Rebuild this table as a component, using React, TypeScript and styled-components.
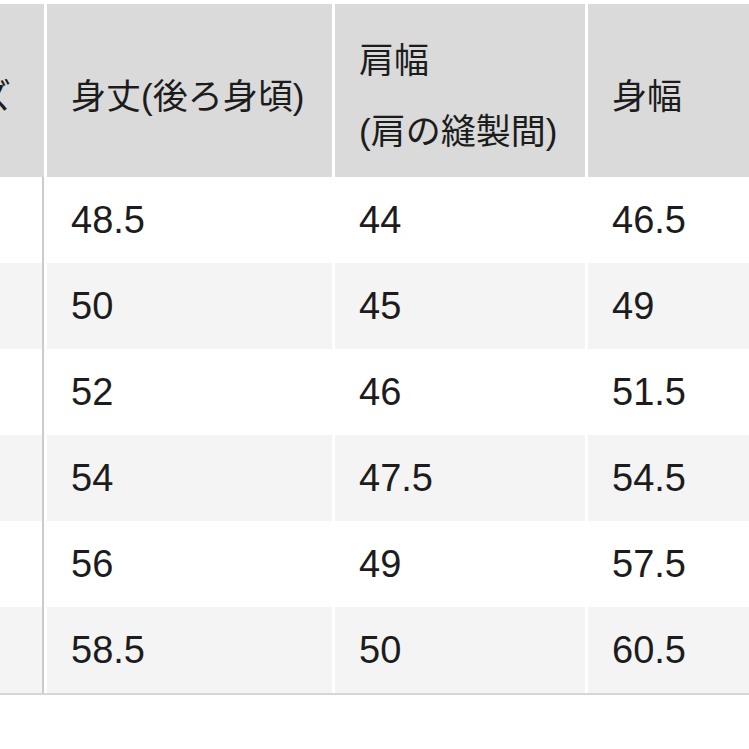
import React from 'react';
import styled, { createGlobalStyle } from 'styled-components';

const GlobalStyle = createGlobalStyle`
  html, body {
    margin: 0;
    padding: 0;
    background: #ffffff;
  }
  body {
    font-family: "Liberation Sans", "Noto Sans CJK JP", sans-serif;
    color: #1c1c1c;
  }
`;

const Viewport = styled.div`
  width: 749px;
  height: 749px;
  overflow: hidden;
  padding-top: 4px;
  box-sizing: border-box;
  background: #ffffff;
`;

// the table is scrolled sideways, so the size column is mostly out of view
const SizeTable = styled.table`
  width: 961px;
  margin-left: -120px;
  border-collapse: separate;
  border-spacing: 3px 0;
  table-layout: fixed;
  border-bottom: 2px solid #d6d6d6;
`;

const Col = styled.col<{ $w: number }>`
  width: ${(p) => p.$w}px;
`;

const HeadCell = styled.th<{ $first?: boolean }>`
  height: 173px;
  box-sizing: border-box;
  padding: 11px 0 0 24px;
  background: #dadada;
  text-align: left;
  vertical-align: middle;
  font-weight: 400;
  font-size: 35px;
  line-height: 71px;
  white-space: nowrap;
  overflow: hidden;
  border-right: ${(p) => (p.$first ? '2px solid transparent' : 'none')};
`;

const Row = styled.tr<{ $shade: boolean }>`
  background: ${(p) => (p.$shade ? '#f4f4f4' : '#ffffff')};
`;

const Cell = styled.td<{ $first?: boolean }>`
  height: 86px;
  box-sizing: border-box;
  padding: 0 0 0 24px;
  font-size: 38px;
  vertical-align: middle;
  white-space: nowrap;
  overflow: hidden;
  border-right: ${(p) => (p.$first ? '2px solid #cbcbcb' : 'none')};
`;

const rows = [
  { size: 'XS', length: '48.5', shoulder: '44', width: '46.5' },
  { size: 'S', length: '50', shoulder: '45', width: '49' },
  { size: 'M', length: '52', shoulder: '46', width: '51.5' },
  { size: 'L', length: '54', shoulder: '47.5', width: '54.5' },
  { size: 'XL', length: '56', shoulder: '49', width: '57.5' },
  { size: 'XXL', length: '58.5', shoulder: '50', width: '60.5' },
];

const App: React.FC = () => {
  return (
    <>
      <GlobalStyle />
      <Viewport>
        <SizeTable>
          <colgroup>
            <Col $w={161} />
            <Col $w={285} />
            <Col $w={250} />
            <Col $w={250} />
          </colgroup>
          <thead>
            <tr>
              <HeadCell $first>サイズ</HeadCell>
              <HeadCell>身丈(後ろ身頃)</HeadCell>
              <HeadCell>
                肩幅
                <br />
                (肩の縫製間)
              </HeadCell>
              <HeadCell>身幅</HeadCell>
            </tr>
          </thead>
          <tbody>
            {rows.map((r, i) => (
              <Row key={r.size} $shade={i % 2 === 1}>
                <Cell $first>{r.size}</Cell>
                <Cell>{r.length}</Cell>
                <Cell>{r.shoulder}</Cell>
                <Cell>{r.width}</Cell>
              </Row>
            ))}
          </tbody>
        </SizeTable>
      </Viewport>
    </>
  );
};

export default App;
